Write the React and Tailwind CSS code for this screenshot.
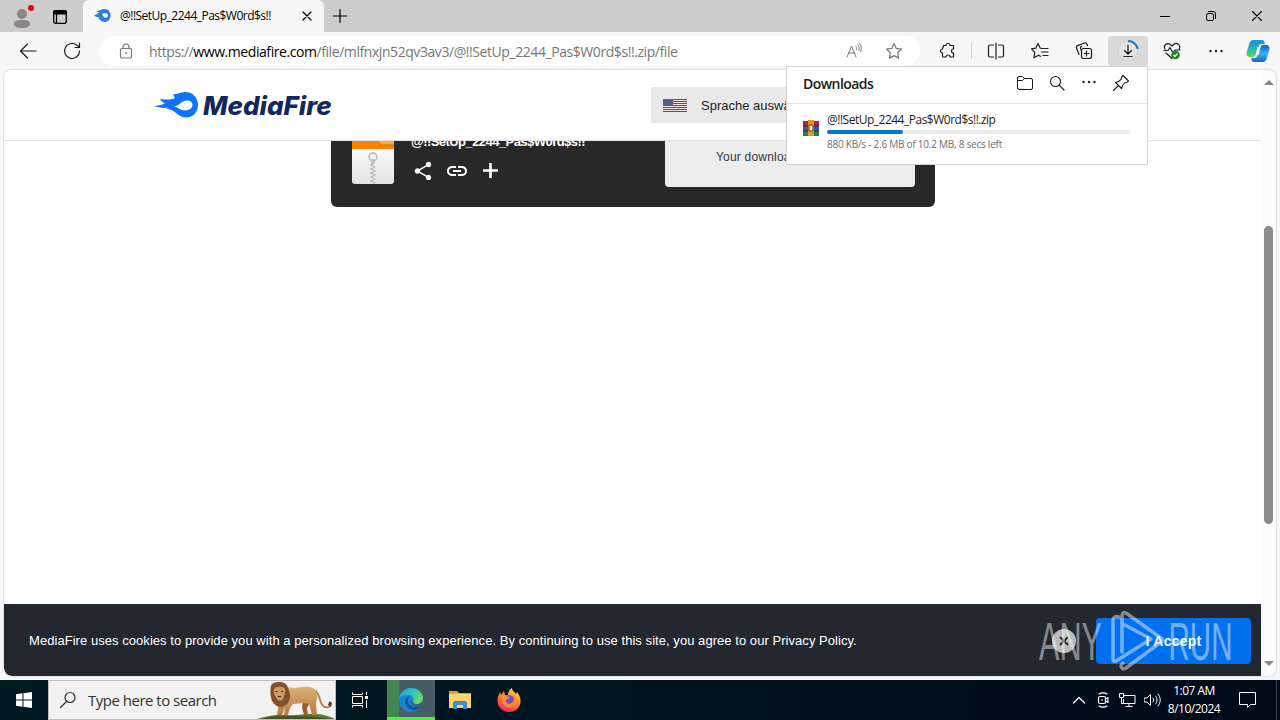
import React from "react";

const ICON = {
  fill: "none",
  stroke: "currentColor",
  strokeWidth: 1.2,
  strokeLinecap: "round",
  strokeLinejoin: "round",
};

const FlameIcon = ({ className }) => (
  <svg viewBox="0 0 44 26" className={className}>
    <path
      fill="#0f73f5"
      fillRule="evenodd"
      d="M0 14C4 14 7 13 11 11.500C9 11 7 9 6 6.500C10 8 17 8 21 6C20 5 20 3.500 19 2.500C23 2.500 26 0 31 0C39 0 44 6 44 13C44 20 39 25.500 32 25.500C26 25.500 23 21 18.500 18.500C16 17 13.500 17 12 17C13 16.300 14 16 14.500 15.500C9 16.500 4 15.500 0 14ZM20 14.500C24 15 26 18.500 31 18.500C35.500 18.500 38.500 16 38.500 12.800C38.500 10 36 8.500 33 8.500C28 8.500 25 14 20 14.500Z"
    />
  </svg>
);

const TabBar = () => (
  <div className="flex h-8 bg-[#cdcdcd] text-black">
    <div className="relative flex w-11 items-center justify-center">
      <svg width="18" height="20" viewBox="0 0 18 20" className="mt-1 text-[#8d8784]">
        <circle cx="9" cy="6" r="5" fill="currentColor" />
        <path d="M1 16c0-3 2-4 8-4s8 1 8 4-4 4-8 4-8-1-8-4Z" fill="currentColor" />
      </svg>
      <span className="absolute left-7 top-[5px] h-1.5 w-1.5 rounded-full bg-[#e3000b]" />
    </div>
    <div className="flex w-[39px] items-center pl-[9px]">
      <svg width="14" height="14" viewBox="0 0 14 14" className="mt-px">
        <rect x="0.7" y="0.7" width="12.6" height="12.6" rx="2" fill="none" stroke="currentColor" strokeWidth="1.3" />
        <path d="M1 1h12v3H1zM3.5 4v9" stroke="currentColor" strokeWidth="1.2" />
      </svg>
    </div>
    <div className="flex w-[241px] items-center rounded-t-md bg-[#f7f7f7] pl-[11px]">
      <svg width="17" height="14" viewBox="0 0 17 14">
        <path
          fill="#2f7fe0"
          fillRule="evenodd"
          d="M0 6.500C3 5 5 4 5 3C3 3 3 2.500 2 2C6 2 7 0 10.500 0C14.500 0 16.500 3 16.500 6.500C16.500 10.500 14 13 10.500 13C7 13 6 10 3.500 9C4.500 9 5 8.500 5 8C3 8 1 7.500 0 6.500ZM8 5C9 5.500 9 8 10.500 8.500C12.500 9 14 8 14 6.500C14 5 12.500 4 11 4C10 4 9 4.500 8 5Z"
        />
      </svg>
      <span className="ml-[9px] w-[178px] whitespace-nowrap font-['Open_Sans'] text-[12px] tracking-[-0.52px]">
        @!!SetUp_2244_Pas$W0rd$s!!
      </span>
      <svg width="10" height="10" viewBox="0 0 10 10" className="ml-1">
        <path d="M1 1l8 8M9 1l-8 8" {...ICON} />
      </svg>
    </div>
    <div className="flex flex-1 items-center pl-[9px]">
      <svg width="14" height="14" viewBox="0 0 14 14">
        <path d="M7 .5v13M.5 7h13" {...ICON} />
      </svg>
    </div>
    <div className="flex w-[46px] items-center justify-center">
      <svg width="10" height="10" viewBox="0 0 10 10">
        <path d="M0 5.5h10" stroke="currentColor" />
      </svg>
    </div>
    <div className="flex w-[46px] items-center justify-center">
      <svg width="10" height="10" viewBox="0 0 10 10">
        <rect x=".5" y="2.5" width="7" height="7" rx="1.5" {...ICON} strokeWidth="1" />
        <path d="M2.5.5h5a2 2 0 0 1 2 2v5" {...ICON} strokeWidth="1" />
      </svg>
    </div>
    <div className="flex w-[46px] items-center justify-center">
      <svg width="10" height="10" viewBox="0 0 10 10">
        <path d="M.5.5l9 9M9.5.5l-9 9" {...ICON} strokeWidth="1.1" />
      </svg>
    </div>
  </div>
);

const ToolButton = ({ children }) => (
  <div className="flex w-11 shrink-0 items-center justify-center">
    <svg width="18" height="18" viewBox="0 0 18 18">
      {children}
    </svg>
  </div>
);

const Toolbar = () => (
  <div className="flex h-[38px] items-stretch bg-[#f7f7f7] pb-1 pl-1.5 pt-1 text-[#1b1b1b]">
    <ToolButton>
      <path d="M17 9H1.5M8.5 2L1.5 9l7 7" {...ICON} />
    </ToolButton>
    <ToolButton>
      <path d="M16.5 9A7.5 7.5 0 1 1 13.5 3L16.5 5M16.5 1v4.5H12" {...ICON} />
    </ToolButton>
    <div className="ml-[5px] flex w-[821px] shrink-0 items-center rounded-full bg-white text-[#767676]">
      <svg width="14" height="16" viewBox="0 0 14 16" className="ml-5">
        <rect x="1.5" y="5.5" width="11" height="9.5" rx="1.5" {...ICON} />
        <path d="M4 5.5V4a3 3 0 0 1 6 0v1.500" {...ICON} />
        <circle cx="7" cy="10" r=".9" fill="currentColor" />
      </svg>
      <div className="ml-4 w-[692px] whitespace-nowrap font-['Open_Sans'] text-[14px] tracking-[-0.43px]">
        https://<span className="text-black">www.mediafire.com</span>
        /file/mlfnxjn52qv3av3/@!!SetUp_2244_Pas$W0rd$s!!.zip/file
      </div>
      <svg width="18" height="18" viewBox="0 0 18 18" className="ml-1">
        <path d="M2 15L6.500 4l4.500 11M3.500 11h6M10.500 4c1 .8 1.300 2 1 3.500M12.500 2.500c1.800 1.500 2 4 1.300 6M14 1c2.500 2 3 6 1.500 9" {...ICON} strokeWidth="1" />
      </svg>
      <svg width="18" height="18" viewBox="0 0 18 18" className="ml-[22px]">
        <path d="M9 1.500l2.300 4.900 5.200.7-3.800 3.700.9 5.300L9 13.600l-4.600 2.500.9-5.300L1.500 7.100l5.200-.7Z" {...ICON} />
      </svg>
    </div>
    <div className="ml-1.5 flex">
      <ToolButton>
        <path d="M4.500 3.500H7a2 2 0 0 1 4 0h3.500V7a2 2 0 1 0 0 4v4H11a2 2 0 0 0-4 0H4.500a1 1 0 0 1-1-1v-3a2 2 0 0 1 0-4Z" {...ICON} />
      </ToolButton>
      <div className="my-auto ml-px mr-0.5 h-4 w-px bg-[#d0d0d0]" />
      <ToolButton>
        <path d="M6.500 3H3a1.500 1.500 0 0 0-1.500 1.500v9A1.500 1.500 0 0 0 3 15h3.500M11.500 3H15a1.500 1.500 0 0 1 1.500 1.500v9A1.500 1.500 0 0 1 15 15h-3.500M9 1v16" {...ICON} />
      </ToolButton>
      <ToolButton>
        <path d="M11 6.500L9.300 6.200 7 1.500 4.800 6.200l-4.300.6 3.300 3.500-.8 5.400 4.500-2.500 2 1.100M12 6.500h5M10.500 10h6.500M12 13.500h5" {...ICON} />
      </ToolButton>
      <ToolButton>
        <rect x="6.500" y="6.500" width="10" height="10" rx="2" {...ICON} />
        <path d="M11.500 9v5M9 11.500h5M4 12.500L1.500 6c-.4-1 0-2 1-2.400L9.500 1c1-.3 2 .2 2.400 1.200l.6 1.500M6.500 9L5.600 6.500c-.3-1 .2-1.800 1-2.100" {...ICON} />
      </ToolButton>
    </div>
    <div className="ml-0.5 flex w-10 shrink-0 items-center justify-center rounded bg-[#dadada]">
      <svg width="24" height="24" viewBox="0 0 24 24">
        <circle cx="12" cy="12" r="10" fill="#e3e3e3" stroke="#cfcfcf" />
        <path d="M12 2a10 10 0 0 1 9.800 8" fill="none" stroke="#1a76c0" strokeWidth="2" />
        <path d="M12 6v9M8.500 11.500L12 15l3.500-3.500M8 17.500h8" {...ICON} />
      </svg>
    </div>
    <div className="ml-0.5 flex">
      <ToolButton>
        <path d="M2 7C0 3 4 .5 7 2.200L9 4l2-1.800c3-2 7 .8 5.300 4.800M1 8.500h4L7 5.500l3 5.500 2-3h5M3 11l6 5.500" {...ICON} />
        <circle cx="12.500" cy="13" r="4.300" fill="#138a17" />
        <path d="M10.500 13l1.500 1.500 2.500-3" fill="none" stroke="white" strokeWidth="1.200" />
      </ToolButton>
      <ToolButton>
        <circle cx="3.500" cy="9" r="1.200" fill="currentColor" />
        <circle cx="9" cy="9" r="1.200" fill="currentColor" />
        <circle cx="14.500" cy="9" r="1.200" fill="currentColor" />
      </ToolButton>
    </div>
    <div className="-ml-0.5 flex w-11 shrink-0 items-center justify-center">
      <svg width="24" height="24" viewBox="0 0 24 24">
        <defs>
          <linearGradient id="copA" x1="0" y1="0" x2="0" y2="1">
            <stop offset="0" stopColor="#1294dc" />
            <stop offset=".55" stopColor="#29b8b0" />
            <stop offset="1" stopColor="#67d15c" />
          </linearGradient>
          <linearGradient id="copB" x1="0" y1="0" x2="0" y2="1">
            <stop offset="0" stopColor="#1557c8" />
            <stop offset=".5" stopColor="#35b5ee" />
            <stop offset="1" stopColor="#1c62d4" />
          </linearGradient>
        </defs>
        <path d="M7 1h9c2 0 2.500 2 3 4h-3c-2 0-3 1-3.500 3L10 15c-.6 2-1.500 3-3.500 3H4c-3.500 0-4-3-3-6L3.500 4C4.300 2 5.300 1 7 1Z" fill="url(#copA)" />
        <path d="M17 23H8c-2 0-2.500-2-3-4h3c2 0 3-1 3.500-3L14 9c.6-2 1.500-3 3.500-3H20c3.500 0 4 3 3 6l-2.500 8c-.8 2-1.800 3-3.500 3Z" fill="url(#copB)" />
        <path d="M11.500 8h3L12.500 16h-3Z" fill="#f7f7f7" />
      </svg>
    </div>
  </div>
);

const SiteHeader = () => (
  <div className="flex h-[71px] items-center border-b border-[#e2e2e2] bg-white pl-[150px]">
    <FlameIcon className="h-[26px] w-11" />
    <span className="ml-[5px] mt-0.5 w-[448px] font-['Inter'] text-[26px] font-extrabold italic leading-none tracking-[0px] text-[#12275c]">
      MediaFire
    </span>
    <div className="flex h-9 w-[300px] items-center bg-[#e9e9ea] pl-3">
      <svg width="24" height="13" viewBox="0 0 24 13">
        <rect width="24" height="13" fill="#f6e3e7" />
        <path d="M0 .5h24M0 2.500h24M0 4.500h24M0 6.500h24M0 8.500h24M0 10.500h24M0 12.500h24" stroke="#c4243f" strokeWidth="1.100" />
        <rect width="10" height="7" fill="#5a5c88" />
      </svg>
      <span className="ml-3.5 mt-px whitespace-nowrap font-['Liberation_Sans'] text-[13px] text-[#1c1c1c]">
        Sprache auswählen
      </span>
    </div>
  </div>
);

const FileCard = () => (
  <div className="ml-[327px] flex h-[66px] w-[604px] overflow-hidden rounded-b-md bg-[#282828] text-white">
    <svg width="42" height="44" viewBox="0 0 42 44" className="-mt-px ml-[21px]">
      <defs>
        <linearGradient id="zipBody" x1="0" y1="0" x2="0" y2="1">
          <stop offset="0" stopColor="#fff" />
          <stop offset="1" stopColor="#e4e4e4" />
        </linearGradient>
      </defs>
      <path d="M0 0h42v41a3 3 0 0 1-3 3H3a3 3 0 0 1-3-3Z" fill="url(#zipBody)" />
      <path d="M0 0h42v9H0Z" fill="#fb8200" />
      <path d="M26 0h16v5H30Z" fill="#fdad3b" />
      <path d="M27 5h15" stroke="#d66b00" />
      <circle cx="21" cy="17" r="4" fill="none" stroke="#b9b9b9" strokeWidth="1.500" />
      <path d="M19 19h4v5h-4Z" fill="#c6c6c6" />
      <path d="M20 24v20" stroke="#bdbdbd" strokeWidth="3" strokeDasharray="2 2" />
      <path d="M22 26v18" stroke="#c6c6c6" strokeWidth="3" strokeDasharray="2 2" />
    </svg>
    <div className="ml-[17px] w-[254px]">
      <p className="-mt-[7px] whitespace-nowrap font-['Liberation_Sans'] text-[13px] font-bold leading-4 tracking-[-0.55px]">
        @!!SetUp_2244_Pas$W0rd$s!!
      </p>
      <div className="mt-[9px] flex items-center pl-px">
        <svg width="22" height="22" viewBox="0 0 24 24" fill="currentColor">
          <path d="M18 16.080c-.76 0-1.440.3-1.960.77L8.910 12.700c.05-.23.09-.46.09-.7s-.04-.47-.09-.7l7.050-4.110c.54.5 1.250.81 2.040.81 1.660 0 3-1.340 3-3s-1.340-3-3-3-3 1.340-3 3c0 .24.04.47.09.7L8.040 9.810C7.500 9.310 6.790 9 6 9c-1.660 0-3 1.340-3 3s1.340 3 3 3c.79 0 1.500-.31 2.040-.81l7.120 4.160c-.05.21-.08.43-.08.65 0 1.610 1.310 2.920 2.920 2.920s2.920-1.310 2.920-2.920-1.310-2.920-2.920-2.920z" />
        </svg>
        <svg width="24" height="24" viewBox="0 0 24 24" fill="currentColor" className="ml-[11px]">
          <path d="M3.900 12c0-1.710 1.390-3.100 3.100-3.100h4V7H7c-2.760 0-5 2.240-5 5s2.240 5 5 5h4v-1.900H7c-1.710 0-3.100-1.390-3.100-3.100zM8 13h8v-2H8v2zm9-6h-4v1.900h4c1.710 0 3.100 1.390 3.100 3.100s-1.390 3.100-3.100 3.100h-4V17h4c2.760 0 5-2.240 5-5s-2.240-5-5-5z" />
        </svg>
        <svg width="15" height="15" viewBox="0 0 15 15" className="-mt-px ml-3.5">
          <path d="M7.500 0v15M0 7.500h15" stroke="currentColor" strokeWidth="2.600" />
        </svg>
      </div>
    </div>
    <div className="h-[46px] w-[250px] rounded-b bg-[#ededed] pl-[51px] pt-2">
      <p className="whitespace-nowrap font-['Liberation_Sans'] text-[12px] leading-4 tracking-[0.2px] text-[#33333f]">
        Your download is starting...
      </p>
    </div>
  </div>
);

const CookieBar = () => (
  <div className="flex h-[72px] items-center rounded-bl-lg bg-[#23272f] pl-[25px] pt-0.5 text-white">
    <p className="w-[1023px] whitespace-nowrap font-['Liberation_Sans'] text-[13px] tracking-[0.05px]">
      MediaFire uses cookies to provide you with a personalized browsing experience. By continuing to use this site,
      you agree to our Privacy Policy.
    </p>
    <div className="flex h-6 w-6 items-center justify-center rounded-full bg-[#b9babc]">
      <svg width="10" height="10" viewBox="0 0 10 10">
        <path d="M1 1l8 8M9 1l-8 8" stroke="#23272f" strokeWidth="1.800" />
      </svg>
    </div>
    <button className="ml-5 h-[46px] w-[155px] rounded bg-[#0070f0] font-['Liberation_Sans'] text-[14px] font-bold tracking-[0.25px]">
      I Accept
    </button>
  </div>
);

const Watermark = () => (
  <svg width="200" height="62" viewBox="0 0 200 62" className="absolute left-[1038px] top-[610px] opacity-45">
    <g fill="#fff" fontFamily="Liberation Sans" fontSize="54">
      <text x="1" y="49.500" textLength="63" lengthAdjust="spacingAndGlyphs">ANY</text>
      <text x="130.500" y="49.500" textLength="64" lengthAdjust="spacingAndGlyphs">RUN</text>
    </g>
    <g fill="none" stroke="#fff" strokeWidth="3.500" strokeLinecap="round" strokeLinejoin="round">
      <path d="M81 7c-3-1-6 0-6 4v38c0 2 1 3 3 2L113 29 85 14" />
      <path d="M84 42V6c0-3 2-4 4-3L123 28c2 1 2 3 0 4L88 58c-3 2-5 0-5-2 0-1 1-2 2-3" />
    </g>
  </svg>
);

const DownloadsPanel = () => (
  <div className="absolute left-[786px] top-[66px] h-[99px] w-[362px] border border-[#d2d2d2] bg-white font-['Open_Sans'] text-[#1b1b1b]">
    <div className="flex h-[37px] items-center border-b border-[#e5e5e5] pl-4">
      <span className="w-[213px] pb-1 text-[14px] font-semibold tracking-[-0.55px]">Downloads</span>
      <div className="flex items-center gap-[14px] pb-1">
        <svg width="18" height="18" viewBox="0 0 18 18">
          <path d="M1.500 14V4A1.500 1.500 0 0 1 3 2.500h3.500L8.500 4.500H15A1.500 1.500 0 0 1 16.500 6v8a1.500 1.500 0 0 1-1.500 1.500H3A1.500 1.500 0 0 1 1.500 14ZM1.500 6.500h5l2-2" {...ICON} strokeWidth="1" />
        </svg>
        <svg width="18" height="18" viewBox="0 0 18 18">
          <circle cx="7.500" cy="7.500" r="5" {...ICON} strokeWidth="1.100" />
          <path d="M11.200 11.200L16 16" {...ICON} />
        </svg>
        <svg width="18" height="18" viewBox="0 0 18 18">
          <circle cx="3.500" cy="8" r="1.200" fill="currentColor" />
          <circle cx="9" cy="8" r="1.200" fill="currentColor" />
          <circle cx="14.500" cy="8" r="1.200" fill="currentColor" />
        </svg>
        <svg width="18" height="18" viewBox="0 0 18 18">
          <path d="M11 1.500L16.500 7l-1 1-3 1-2 2.500-1 3L3.500 8.500l3-1L9 5.500l1-3Z M6.500 11.500l-5 5" {...ICON} strokeWidth="1.100" />
        </svg>
      </div>
    </div>
    <div className="flex items-start pl-4 pt-2">
      <svg width="16" height="16" viewBox="0 0 16 16" className="mt-2">
        <path d="M0 1h16v5H0Z" fill="#b72335" />
        <path d="M0 6h16v5H0Z" fill="#3d55a5" />
        <path d="M0 11h16v5H0Z" fill="#2c8234" />
        <path d="M0 6h3v5H0Z" fill="#71369c" />
        <path d="M5 0h6v16H5Z" fill="#d89a2f" />
        <path d="M6 5h4v6H6Z" fill="#f3e7cb" stroke="#713915" />
        <path d="M0 6h5M11 6h5M0 11h5M11 11h5" stroke="#322a30" />
      </svg>
      <div className="ml-2 w-[304px] whitespace-nowrap">
        <p className="text-[12px] leading-4 tracking-[-0.5px]">@!!SetUp_2244_Pas$W0rd$s!!.zip</p>
        <div className="mt-0.5 h-1 rounded-full bg-[#ececec]">
          <div className="h-1 w-[76px] rounded-full bg-[#0078d4]" />
        </div>
        <p className="mt-0.5 text-[10px] leading-4 tracking-[-0.24px] text-[#6e6e6e]">
          880 KB/s - 2.6 MB of 10.2 MB, 8 secs left
        </p>
      </div>
    </div>
  </div>
);

const Lion = () => (
  <svg width="78" height="38" viewBox="0 0 78 38">
    <defs>
      <linearGradient id="lionCoat" x1="0" y1="0" x2="0" y2="1">
        <stop offset="0" stopColor="#deb27a" />
        <stop offset="1" stopColor="#b57a40" />
      </linearGradient>
    </defs>
    <path d="M0 38C10 35 20 33 30 34c12 1 18-2 28-1 8 0 14 2 20 5Z" fill="#5d7433" />
    <path d="M4 38c14-4 44-4 70 0Z" fill="#445225" />
    <path d="M57 9c6 2 5 12 9 16 3 2 7 2 8-1" fill="none" stroke="#b07a45" strokeWidth="1.800" strokeLinecap="round" />
    <path d="M72 21c1-1 3 0 3 2l-2 3-2-2Z" fill="#6b3f22" />
    <path d="M46 20l-1 6 2 8h4l-1-7 3-6Z" fill="#94602f" />
    <path d="M28 6c6 1 12 1 18 0 8-1 13 1 14 7 1 4-1 7-1 10l1 11h-5l-3-11c-5-2-10 0-16 0l-3 4-2 7h-4l1-8-3 8h-5l2-13Z" fill="url(#lionCoat)" />
    <path d="M14 5c1-3 4-4 8-4 5 0 8 2 9 6 2 4 3 9 1 13-1 3-4 5-8 6-4 0-7-3-9-6-2-5-2-11-1-15Z" fill="#80512a" />
    <path d="M17 8c2-3 9-3 11 0 1 4-1 7-2 10-1 2-5 2-6 0-2-3-4-6-3-10Z" fill="#cf9c60" />
    <path d="M18.500 10.500h2M24 10.500h2M21 15.500h3" stroke="#422113" strokeWidth="1.200" />
  </svg>
);

const Taskbar = () => (
  <div className="flex h-10 bg-gradient-to-r from-[#001a20] via-[#00141f] to-[#000a19] text-white">
    <div className="flex w-12 items-center justify-center">
      <svg width="16" height="16" viewBox="0 0 16 16" fill="currentColor">
        <path d="M0 2.200l6.500-.9v6.200H0ZM7.500 1.200L16 0v7.500H7.500ZM0 8.500h6.500v6.200L0 13.800ZM7.500 8.500H16V16l-8.500-1.200Z" />
      </svg>
    </div>
    <div className="flex w-72 items-center border border-[#bdbdbd] bg-[#f3f2f2] pl-2.5 text-[#303030]">
      <svg width="18" height="18" viewBox="0 0 18 18">
        <circle cx="11" cy="6.500" r="5" {...ICON} />
        <path d="M7.500 10.500L1.500 16.500" {...ICON} />
      </svg>
      <span className="ml-[11px] w-[169px] whitespace-nowrap font-['Open_Sans'] text-[15px] tracking-[-0.5px]">
        Type here to search
      </span>
      <Lion />
    </div>
    <div className="flex w-[51px] items-center justify-center pr-1">
      <svg width="18" height="18" viewBox="0 0 18 18">
        <path d="M1.500 1.500v2h10v-2M1.500 16.500v-2h10v2M1.500 5.500h10v7h-10ZM15.500 1v3M15.500 9v8" fill="none" stroke="currentColor" />
        <path d="M14 5h3v3h-3Z" fill="currentColor" />
      </svg>
    </div>
    <div className="flex w-12 items-center justify-center border-b-[3px] border-[#4cf33b] bg-gradient-to-r from-[#468653] from-25% to-[#485d65] to-25%">
      <svg width="24" height="24" viewBox="0 0 24 24" className="mt-0.5">
        <defs>
          <linearGradient id="edgeTop" x1="0" y1="0" x2="1" y2=".4">
            <stop offset="0" stopColor="#1fa0d2" />
            <stop offset=".6" stopColor="#35c1be" />
            <stop offset="1" stopColor="#65dc61" />
          </linearGradient>
        </defs>
        <circle cx="12" cy="12" r="12" fill="#1684d4" />
        <path d="M0 11C1 4 6 0 12 0c7 0 12 5 12 10 0 4-3 6-6 6-3 0-5-1-4-3 2-3-1-6-5-6-5 0-8 2-9 4Z" fill="url(#edgeTop)" />
        <path d="M10 8c-6 3-5 12 4 14 4 0 7-2 8-4-7 3-14-1-13-6 0-2 1-3 1-4Z" fill="#10559f" />
        <path d="M14 13c0 2 2 4 5 3 2 0 4-2 4-3l1 1c0 1-.5 3-1.500 4-5 2-10 0-10-4Z" fill="#485d65" />
      </svg>
    </div>
    <div className="flex w-[49px] items-center justify-center">
      <svg width="22" height="20" viewBox="0 0 22 20">
        <path d="M0 1h8l2 2h12v15H0Z" fill="#e4a22b" />
        <path d="M0 4h22v14H0Z" fill="#fbd66b" />
        <path d="M4 19v-6a2 2 0 0 1 2-2h10a2 2 0 0 1 2 2v6h-4v-4H8v4Z" fill="#3c91cd" />
      </svg>
    </div>
    <div className="flex w-[49px] items-center justify-center">
      <svg width="24" height="24" viewBox="0 0 24 24">
        <defs>
          <linearGradient id="fox" x1=".8" y1="0" x2=".3" y2="1">
            <stop offset="0" stopColor="#ffe43d" />
            <stop offset=".45" stopColor="#ff8b24" />
            <stop offset="1" stopColor="#f52068" />
          </linearGradient>
        </defs>
        <path d="M3 4l1 3 3-4 1 4h3c0-3 2-6 4-7 0 3 3 4 4 6l1-2c2 3 4 6 3.500 10C23 20 18 24 12 24S1 19.500.5 13.500C0 9 2 7 3 4Z" fill="url(#fox)" />
        <circle cx="12" cy="12.500" r="5.500" fill="#754bd2" />
        <path d="M5 8c4-1 5 1 8 1-1 2-4 2-4 4 0 3 5 4 7 1 2-3 0-6-2-7 5 0 6 5 5 8-2 6-12 6-14-1Z" fill="#ff8a2c" />
      </svg>
    </div>
    <div className="ml-auto flex items-center">
      <div className="flex gap-2">
        <svg width="16" height="16" viewBox="0 0 16 16">
          <path d="M2.500 11L8 5.500l5.500 5.500" {...ICON} />
        </svg>
        <svg width="16" height="16" viewBox="0 0 16 16">
          <path d="M4 2c2-1.500 6-1.500 8 0M4 14c2 1.500 6 1.500 8 0M10.500 7l2.500-1.500v5L10.500 9" {...ICON} strokeWidth="1.100" />
          <rect x="3.500" y="4.500" width="7" height="7" rx="1.500" {...ICON} />
          <circle cx="7" cy="8" r=".8" fill="currentColor" />
        </svg>
        <svg width="17" height="16" viewBox="0 0 17 16">
          <path d="M5 3.500h11v8H4.500V7M10 11.500v3M6.500 14.500h7M.5 1.500h4v4h-4ZM2.500 5.500v6h2" fill="none" stroke="currentColor" />
        </svg>
        <svg width="17" height="16" viewBox="0 0 17 16">
          <path d="M.5 6h2.500l3.500-3.500v11L3 10H.5ZM9 6c1 1 1 3 0 4M11.500 4c2 2 2 6 0 8M14 2c3 3 3 9 0 12" {...ICON} strokeWidth="1" />
        </svg>
      </div>
      <div className="ml-[3px] mr-px w-[60px] text-center font-['Open_Sans'] text-[12px] leading-[18px] tracking-[-0.5px]">
        <p>1:07 AM</p>
        <p>8/10/2024</p>
      </div>
      <svg width="17" height="18" viewBox="0 0 17 18" className="ml-[14px] mr-5">
        <path d="M.5 1.500h16v12h-5l-3 3v-3h-8Z" fill="none" stroke="currentColor" />
      </svg>
      <div className="mr-[3px] h-10 w-px bg-[#3a4450]" />
    </div>
  </div>
);

const App = () => {
  return (
    <div className="relative h-[720px] w-[1280px] overflow-hidden bg-[#f7f7f7]">
      <TabBar />
      <Toolbar />
      <div className="mx-1 mb-1 flex h-[606px] overflow-hidden rounded-lg bg-white shadow-[0_0_2px_rgba(0,0,0,0.3)]">
        <div className="flex w-[1257px] flex-col">
          <SiteHeader />
          <FileCard />
          <div className="flex-1" />
          <CookieBar />
        </div>
        <div className="flex w-[15px] flex-col items-center bg-[#fcfcfc] py-2.5">
          <div className="h-0 w-0 border-x-[5px] border-b-[5px] border-x-transparent border-b-[#858585]" />
          <div className="mt-[141px] h-[298px] w-[9px] rounded-full bg-[#8b8b8b]" />
          <div className="mt-auto h-0 w-0 border-x-[5px] border-t-[5px] border-x-transparent border-t-[#858585]" />
        </div>
      </div>
      <Taskbar />
      <DownloadsPanel />
      <Watermark />
    </div>
  );
};

export default App;
